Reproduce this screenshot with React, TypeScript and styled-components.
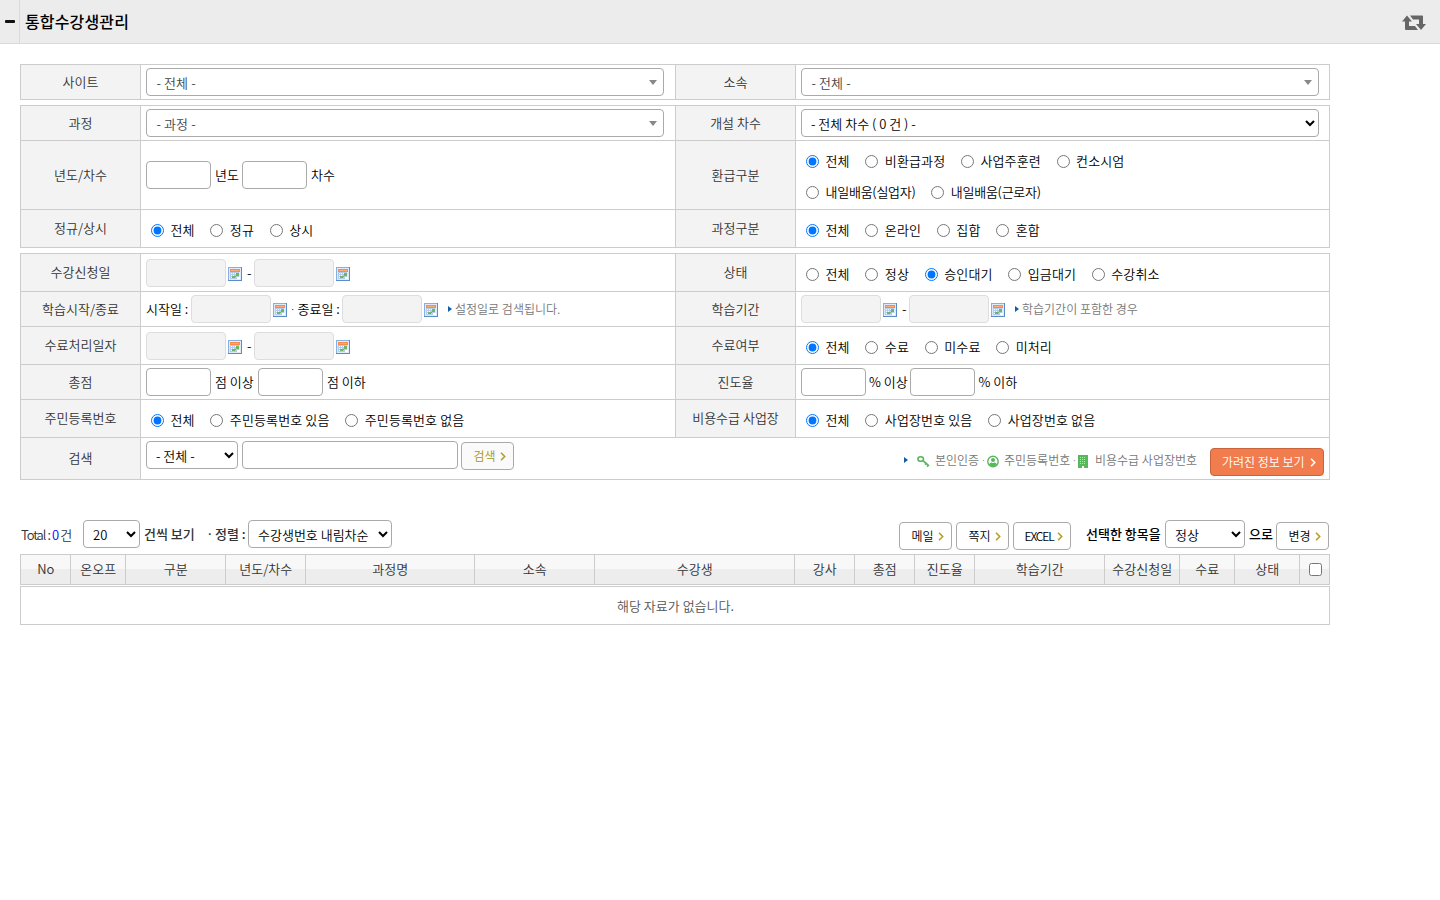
import React from 'react';
import styled, { createGlobalStyle, css } from 'styled-components';

const GlobalStyle = createGlobalStyle`
  * { box-sizing: border-box; }
  body {
    margin: 0;
    background: #fff;
    color: #000;
    font-family: "Noto Sans CJK KR", "Noto Sans", sans-serif;
    font-size: 13px;
    font-weight: 350;
    line-height: 20px;
  }
  input, select, button { font-family: inherit; font-size: inherit; font-weight: inherit; margin: 0; }
`;

const Header = styled.header`
  display: flex;
  align-items: stretch;
  height: 44px;
  background: #ececec;
  border-bottom: 1px solid #dadada;
`;
const Fold = styled.div`
  width: 20px;
  border-right: 1px solid #dadada;
  padding: 20px 0 0 5px;
  &::before { content: ''; display: block; width: 10px; height: 3px; background: #111; border-radius: 1px; }
`;
const Title = styled.h1`
  flex: 1;
  margin: 0;
  padding-left: 5px;
  font-size: 16px;
  font-weight: 500;
  line-height: 43px;
  letter-spacing: 0.15px;
`;
const Refresh = styled.svg`
  width: 24px;
  height: 15px;
  margin: 15px 14px 0 0;
  fill: #666;
`;

const Page = styled.main`
  width: 1310px;
  margin: 20px 0 0 20px;
`;

const Group = styled.section`
  border: solid #ccc;
  border-width: 1px 0 0 1px;
  margin-bottom: 5px;
`;
const Row = styled.div<{ $h: number }>`
  display: grid;
  grid-template-columns: 120px 535px 120px 534px;
  height: ${p => p.$h}px;
`;
const cell = css`
  border: solid #ccc;
  border-width: 0 1px 1px 0;
`;
const Name = styled.div<{ $lift?: boolean }>`
  ${cell}
  display: flex;
  align-items: center;
  justify-content: center;
  padding-bottom: ${p => (p.$lift ? 1 : 0)}px;
  background: #f3f3f3;
  color: #333;
`;
const Field = styled.div<{ $top?: number; $wide?: boolean; $right?: number }>`
  ${cell}
  display: flex;
  align-items: flex-start;
  align-content: flex-start;
  flex-wrap: wrap;
  padding: ${p => p.$top ?? 3}px ${p => p.$right ?? 0}px 0 5px;
  ${p => p.$wide && 'grid-column: span 3; flex-wrap: nowrap;'}
`;

const Text = styled.span<{ $w?: number; $ml?: number; $top?: number; $bold?: boolean }>`
  flex: none;
  width: ${p => (p.$w ? `${p.$w}px` : 'auto')};
  margin: ${p => p.$top ?? 4}px 0 0 ${p => p.$ml ?? 0}px;
  white-space: pre;
  font-weight: ${p => (p.$bold ? 500 : 'inherit')};
`;
const Hint = styled(Text)`
  font-size: 12px;
  color: #777;
`;
const Dot = styled.span`
  font-family: "Noto Sans", sans-serif;
  line-height: 1;
`;

const Input = styled.input<{ $w: number; $ml?: number }>`
  flex: none;
  width: ${p => p.$w}px;
  height: 28px;
  margin-left: ${p => p.$ml ?? 0}px;
  border: 1px solid #aaa;
  border-radius: 4px;
  background: #fff;
  &:disabled { background: #f3f3f3; border-color: #ddd; }
`;
const Select = styled.select<{ $w: number; $ml?: number }>`
  flex: none;
  width: ${p => p.$w}px;
  height: 28px;
  margin-left: ${p => p.$ml ?? 0}px;
  padding: 0 0 0 5px;
  border: 1px solid #aaa;
  border-radius: 4px;
  background: #fff;
  color: #000;
`;
const Combo = styled.div`
  display: flex;
  align-items: center;
  justify-content: space-between;
  width: 518px;
  height: 28px;
  padding: 1px 6px 0 9.5px;
  border: 1px solid #aaa;
  border-radius: 4px;
  color: #444;
  letter-spacing: 0.1px;
  &::after {
    content: '';
    border: solid transparent;
    border-width: 5px 4px 0;
    border-top-color: #888;
  }
`;

const Option = styled.label<{ $tight: boolean }>`
  display: flex;
  align-items: flex-start;
  height: 31px;
  margin-right: 10.7px;
  line-height: 31px;
  letter-spacing: ${p => (p.$tight ? -0.25 : 0.12)}px;
  white-space: nowrap;
  input { width: 13px; height: 13px; margin: 10px 6.5px 0 5px; }
`;

const Button = styled.button<{ $w: number; $ml?: number; $top?: number; $tone?: 'gold' | 'orange' }>`
  display: flex;
  flex: none;
  align-items: center;
  justify-content: space-between;
  width: ${p => p.$w}px;
  height: 28px;
  margin: ${p => p.$top ?? 0}px 0 0 ${p => p.$ml ?? 0}px;
  padding: 0 7px 0 11.5px;
  border: 1px solid #aaa;
  border-radius: 4px;
  background: #fff;
  color: #000;
  font-size: 12px;
  line-height: 20px;
  white-space: nowrap;
  svg { color: #b3a128; }
  ${p => p.$tone === 'gold' && 'background: #fafafa; color: #a8960f;'}
  ${p => p.$tone === 'orange' && 'background: #f17c4d; border-color: #c9633a; color: #fff; padding-left: 11px; svg { color: #fff; }'}
`;
const Tight = styled.span`
  margin-left: -1px;
  letter-spacing: -1.1px;
`;
const Chevron = () => (
  <svg width="6" height="9" viewBox="0 0 6 9" fill="none" stroke="currentColor" strokeWidth="1.6">
    <path d="M1 .8 4.7 4.5 1 8.2" />
  </svg>
);

const CalendarSvg = styled.svg`
  flex: none;
  width: 14px;
  height: 14px;
  margin: 8px 0 0 2px;
`;
const Calendar = () => (
  <CalendarSvg viewBox="0 0 14 14" shapeRendering="crispEdges">
    <rect width="14" height="14" fill="#5a8ccc" />
    <path d="M0 13V0h13v1H1v12z" fill="#86b0e4" />
    <rect x="1" y="1" width="12" height="12" fill="#dfeafa" />
    <rect x="2" y="2" width="10" height="3" fill="#f98b4b" />
    <rect x="3" y="3" width="8" height="1" fill="#fcaa78" />
    <rect x="2" y="5" width="9" height="7" fill="#b4cbeb" />
    <path d="M3 6h1v1H3zM5 6h1v1H5zM7 6h1v1H7zM9 6h1v1H9zM3 8h1v1H3zM5 8h1v1H5zM3 10h1v1H3z" fill="#fff" />
    <path d="M8 6h3v3H8zM4 9h3v2H4zM7 9h1v1H7z" fill="#6fb566" />
    <path d="M9 12v-2h3v1l-1 1z" fill="#fff" />
  </CalendarSvg>
);

const Pointer = styled.i<{ $ml: number; $top?: number }>`
  flex: none;
  margin: ${p => p.$top ?? 11}px 0 0 ${p => p.$ml}px;
  border: solid transparent;
  border-width: 3.5px 0 3.5px 4px;
  border-left-color: #0f5fa6;
`;
const Badge = styled.svg<{ $w: number; $ml: number }>`
  flex: none;
  width: ${p => p.$w}px;
  height: 13px;
  margin: 14px 0 0 ${p => p.$ml}px;
  color: #58b65c;
`;

const Toolbar = styled.div`
  display: flex;
  align-items: flex-start;
  height: 34px;
  margin-top: 40px;
  color: #333;
`;
const Total = styled(Text)`
  letter-spacing: -1.1px;
  word-spacing: 0.4px;
  b { font-weight: 350; color: #00f; }
`;
const Right = styled.div`
  display: flex;
  align-items: flex-start;
  margin-left: auto;
  margin-right: 1px;
  color: #000;
`;

const ListHead = styled.div`
  display: grid;
  grid-template-columns: 50px 55px 100px 80px 169px 120px 200px 60px 60px 60px 130px 75px 55px 65px 30px;
  height: 31px;
  border: solid #ccc;
  border-width: 1px 0 1px 1px;
  background: linear-gradient(#f8f8f8 0 14px, #ededed 14px);
`;
const HeadCell = styled.div`
  display: flex;
  align-items: center;
  justify-content: center;
  border-right: 1px solid #ccc;
  padding: 0 0 1px 0.5px;
  color: #333;
  white-space: nowrap;
  input { width: 13px; height: 13px; margin: 1px 0 0 1px; }
`;
const Empty = styled.div`
  height: 39px;
  margin-top: 1px;
  padding-left: 1px;
  border: 1px solid #ccc;
  color: #555;
  line-height: 37px;
  text-align: center;
`;

function Radios({ name, items, picked = 0 }: { name: string; items: string[]; picked?: number }) {
  return (
    <>
      {items.map((item, i) => (
        <Option key={item} $tight={item.includes('(')}>
          <input type="radio" name={name} defaultChecked={i === picked} />
          {item}
        </Option>
      ))}
    </>
  );
}

function Period() {
  return (
    <>
      <Input disabled $w={80} />
      <Calendar />
      <Text $w={7} $ml={5}>-</Text>
      <Input disabled $w={80} />
      <Calendar />
    </>
  );
}

const columns = ['No', '온오프', '구분', '년도/차수', '과정명', '소속', '수강생', '강사', '총점', '진도율', '학습기간', '수강신청일', '수료', '상태'];

export default function App() {
  return (
    <>
      <GlobalStyle />
      <Header>
        <Fold />
        <Title>통합수강생관리</Title>
        <Refresh viewBox="0 0 24 15">
          <path d="M5 .5 10 6.5H7V11h6l3 4H4Q3 15 3 14V6.5H0z" />
          <path d="M19 15 14 9h3V4.500h-6L8 .5h12Q21 .5 21 1.500V9h3z" />
        </Refresh>
      </Header>
      <Page>
        <Group>
          <Row $h={35}>
            <Name>사이트</Name>
            <Field><Combo>- 전체 -</Combo></Field>
            <Name>소속</Name>
            <Field><Combo>- 전체 -</Combo></Field>
          </Row>
        </Group>
        <Group>
          <Row $h={35}>
            <Name>과정</Name>
            <Field><Combo>- 과정 -</Combo></Field>
            <Name>개설 차수</Name>
            <Field><Select $w={518}><option>- 전체 차수 ( 0 건 ) -</option></Select></Field>
          </Row>
          <Row $h={69}>
            <Name>년도/차수</Name>
            <Field $top={20}>
              <Input $w={65} />
              <Text $w={27} $ml={4}>년도</Text>
              <Input $w={65} />
              <Text $ml={4}>차수</Text>
            </Field>
            <Name>환급구분</Name>
            <Field $top={4} $right={180}>
              <Radios name="refund" items={['전체', '비환급과정', '사업주훈련', '컨소시엄', '내일배움(실업자)', '내일배움(근로자)']} />
            </Field>
          </Row>
          <Row $h={38}>
            <Name $lift>정규/상시</Name>
            <Field $top={4}><Radios name="regular" items={['전체', '정규', '상시']} /></Field>
            <Name $lift>과정구분</Name>
            <Field $top={4}><Radios name="kind" items={['전체', '온라인', '집합', '혼합']} /></Field>
          </Row>
        </Group>
        <Group>
          <Row $h={38}>
            <Name $lift>수강신청일</Name>
            <Field $top={5}><Period /></Field>
            <Name $lift>상태</Name>
            <Field $top={4}><Radios name="state" picked={2} items={['전체', '정상', '승인대기', '입금대기', '수강취소']} /></Field>
          </Row>
          <Row $h={35}>
            <Name>학습시작/종료</Name>
            <Field>
              <Text $w={45}>시작일 :</Text>
              <Input disabled $w={80} />
              <Calendar />
              <Text $w={51} $ml={4}><Dot>· </Dot>종료일 :</Text>
              <Input disabled $w={80} />
              <Calendar />
              <Pointer $ml={10} />
              <Hint $ml={3}>설정일로 검색됩니다.</Hint>
            </Field>
            <Name>학습기간</Name>
            <Field>
              <Period />
              <Pointer $ml={10} />
              <Hint $ml={3}>학습기간이 포함한 경우</Hint>
            </Field>
          </Row>
          <Row $h={38}>
            <Name $lift>수료처리일자</Name>
            <Field $top={5}><Period /></Field>
            <Name $lift>수료여부</Name>
            <Field $top={4}><Radios name="done" items={['전체', '수료', '미수료', '미처리']} /></Field>
          </Row>
          <Row $h={35}>
            <Name>총점</Name>
            <Field>
              <Input $w={65} />
              <Text $w={43} $ml={4}>점 이상</Text>
              <Input $w={65} />
              <Text $ml={4}>점 이하</Text>
            </Field>
            <Name>진도율</Name>
            <Field>
              <Input $w={65} />
              <Text $w={41} $ml={3}>% 이상</Text>
              <Input $w={65} />
              <Text $ml={3.5}>% 이하</Text>
            </Field>
          </Row>
          <Row $h={38}>
            <Name $lift>주민등록번호</Name>
            <Field $top={4}><Radios name="rrn" items={['전체', '주민등록번호 있음', '주민등록번호 없음']} /></Field>
            <Name $lift>비용수급 사업장</Name>
            <Field $top={4}><Radios name="biz" items={['전체', '사업장번호 있음', '사업장번호 없음']} /></Field>
          </Row>
          <Row $h={42}>
            <Name $lift>검색</Name>
            <Field $wide>
              <Select $w={92}><option>- 전체 -</option></Select>
              <Input $w={216} $ml={4} />
              <Button $w={53} $ml={3} $top={1} $tone="gold">검색<Chevron /></Button>
              <Pointer $ml={390} $top={16} />
              <Badge $w={13} $ml={9} viewBox="0 0 13 13" fill="none" stroke="currentColor" strokeWidth="1.6">
                <ellipse cx="3.700" cy="4" rx="2.800" ry="2.300" />
                <path d="M6 5.600l6 5.200M8 9.600l1.800-1.800M10 11.600l1.700-1.900" />
              </Badge>
              <Hint $w={47} $ml={5} $top={9}>본인인증</Hint>
              <Hint $top={9} $w={5}><Dot>·</Dot></Hint>
              <Badge $w={12} $ml={0} viewBox="0 0 12 12">
                <circle cx="6" cy="6" r="5.200" fill="none" stroke="currentColor" strokeWidth="1.400" />
                <circle cx="6" cy="4.500" r="2" fill="currentColor" />
                <path d="M2 9q1-2 2.500-2 1.500 1 3 0Q9 7 10 9q-4 4-8 0" fill="currentColor" />
              </Badge>
              <Hint $w={69} $ml={5} $top={9}>주민등록번호</Hint>
              <Hint $top={9} $w={5}><Dot>·</Dot></Hint>
              <Badge $w={10} $ml={0} viewBox="0 0 10 13">
                <path d="M0 0h10v13H6v-2H4v2H0z" fill="currentColor" />
                <path d="M2 2.500h6M2 4.500h6M2 6.500h6M2 8.500h6" stroke="#b9e0bb" strokeDasharray="1" />
              </Badge>
              <Hint $w={115} $ml={7} $top={9}>비용수급 사업장번호</Hint>
              <Button $w={114} $top={7} $tone="orange">가려진 정보 보기<Chevron /></Button>
            </Field>
          </Row>
        </Group>

        <Toolbar>
          <Total $w={62} $ml={1} $top={5}>Total : <b>0</b> 건</Total>
          <Select $w={57}><option>20</option></Select>
          <Text $w={64} $ml={4} $bold>건씩 보기</Text>
          <Text $w={40} $bold><Dot>· </Dot>정렬 :</Text>
          <Select $w={144}><option>수강생번호 내림차순</option></Select>
          <Right>
            <Button $w={53} $top={2}>메일<Chevron /></Button>
            <Button $w={53} $ml={4} $top={2}>쪽지<Chevron /></Button>
            <Button $w={58} $ml={4} $top={2}><Tight>EXCEL</Tight><Chevron /></Button>
            <Text $w={79} $ml={15} $bold>선택한 항목을</Text>
            <Select $w={80}><option>정상</option></Select>
            <Text $w={27} $ml={4} $bold>으로</Text>
            <Button $w={53} $top={2}>변경<Chevron /></Button>
          </Right>
        </Toolbar>
        <ListHead>
          {columns.map(c => <HeadCell key={c}>{c}</HeadCell>)}
          <HeadCell><input type="checkbox" /></HeadCell>
        </ListHead>
        <Empty>해당 자료가 없습니다.</Empty>
      </Page>
    </>
  );
}
